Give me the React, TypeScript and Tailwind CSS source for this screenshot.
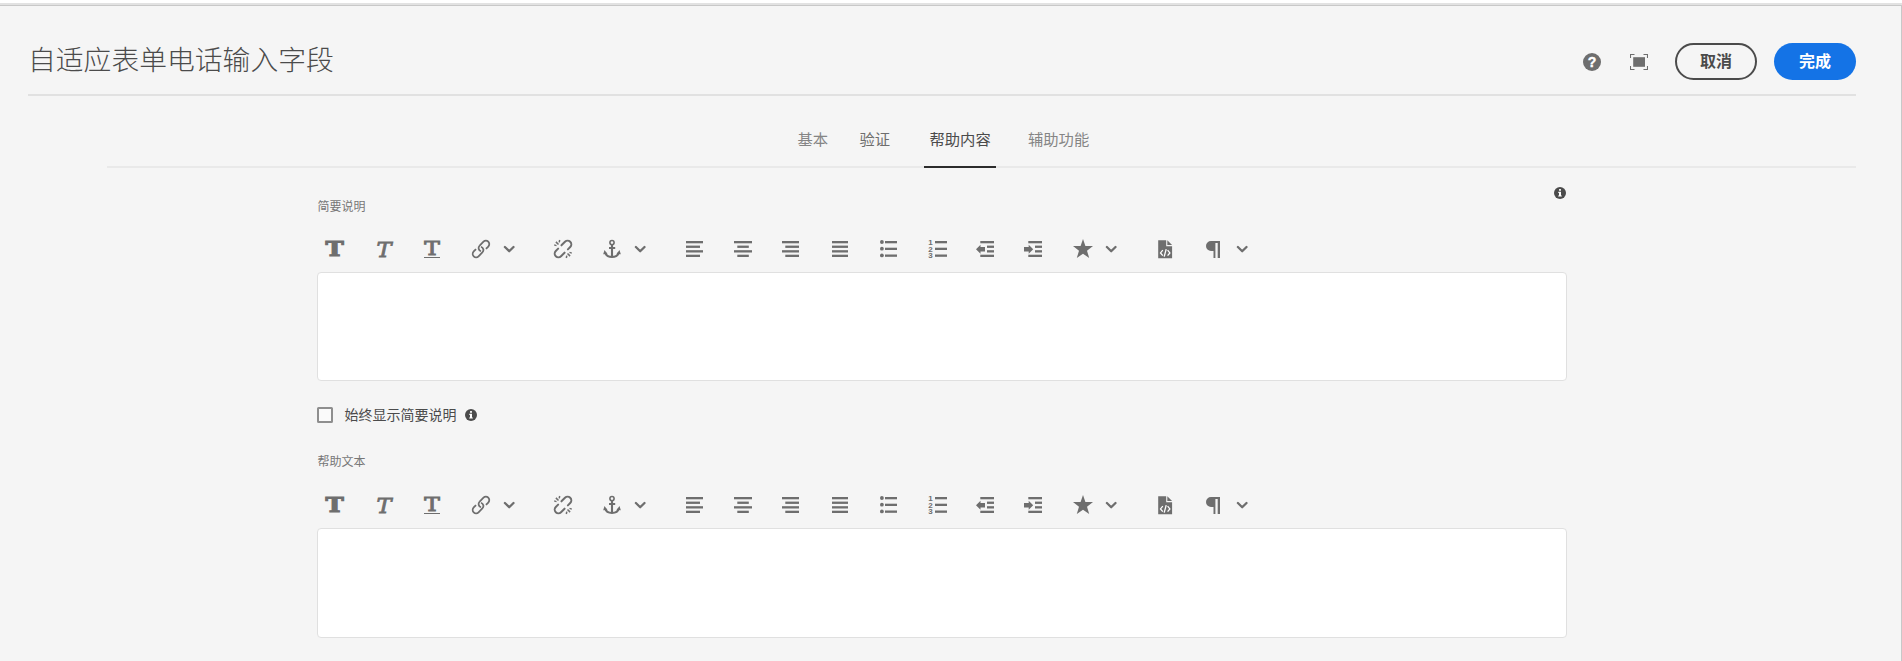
import type { ReactNode } from "react";

function Icon({ className = "", children }: { className?: string; children: ReactNode }) {
  return (
    <button type="button" className={`h-5 w-5 shrink-0 ${className}`}>
      <svg viewBox="0 0 20 20" width="20" height="20" fill="currentColor" className="block overflow-visible">
        {children}
      </svg>
    </button>
  );
}

function Chevron({ className = "" }: { className?: string }) {
  return (
    <button type="button" className={`h-5 w-3 shrink-0 ${className}`}>
      <svg viewBox="0 0 12 20" width="12" height="20" fill="none" stroke="currentColor" strokeWidth="2.3" strokeLinecap="round" strokeLinejoin="round" className="block">
        <path d="M1.9 8 6.2 12.2 10.5 8" />
      </svg>
    </button>
  );
}

/* Each entry is [x, y, width] of one horizontal stroke. */
function Lines({ rows, height = 2.3 }: { rows: number[][]; height?: number }) {
  return (
    <>
      {rows.map(([x, y, w]) => (
        <rect key={y} x={x} y={y} width={w} height={height} />
      ))}
    </>
  );
}

function InfoIcon({ className = "" }: { className?: string }) {
  return (
    <svg viewBox="0 0 12 12" width="12" height="12" className={`block shrink-0 text-[#4b4b4b] ${className}`}>
      <circle cx="6" cy="6" r="6" fill="currentColor" />
      <rect x="5" y="2" width="2" height="1.8" rx=".6" fill="#fff" />
      <path d="M4.3 4.8H7v3.7h.8v1.1H4.2V8.5H5V5.9h-.7z" fill="#fff" />
    </svg>
  );
}

const SPARKS = "M1.2 5.9 3.5 6.6M2.9 2.9 5.5 5.5M6.7 1 6.2 3.4";

function Toolbar() {
  return (
    <div className="flex h-5 items-center pl-2 text-[#6e6e6e]">
      <Icon>
        <text x="0.4" y="17.4" textLength="18.2" lengthAdjust="spacingAndGlyphs" fontSize="20.5" fontWeight="700" stroke="currentColor" strokeWidth="1.2" className="font-['DejaVu_Serif',serif]">T</text>
      </Icon>
      <Icon className="ml-[30px]">
        <text x="1.5" y="17.7" textLength="15" lengthAdjust="spacingAndGlyphs" fontSize="21" fontStyle="italic" stroke="currentColor" strokeWidth=".8" className="font-['DejaVu_Serif',serif]">T</text>
      </Icon>
      <Icon className="ml-[27px]">
        <text x="2.2" y="16" textLength="15.6" lengthAdjust="spacingAndGlyphs" fontSize="18.8" stroke="currentColor" strokeWidth=".9" className="font-['DejaVu_Serif',serif]">T</text>
        <rect x="2" y="18" width="16" height="1" />
      </Icon>
      <Icon className="ml-[29px]">
        <g transform="rotate(-45 10 10)" fill="none" stroke="currentColor" strokeWidth="1.8">
          <path d="M13.6 13.4h3.3a3.4 3.4 0 0 0 0-6.8H11.5a3.4 3.4 0 0 0-3.1 5" />
          <path d="M6.4 6.6H3.1a3.4 3.4 0 0 0 0 6.8H8.5a3.4 3.4 0 0 0 3.1-5" />
        </g>
      </Icon>
      <Chevron className="ml-3" />
      <Icon className="ml-[38px]">
        <g fill="none" stroke="currentColor" strokeWidth="2" strokeLinecap="round">
          <path d="M11.5 6.3h5a3.7 3.7 0 0 1 0 7.4H13.2" transform="rotate(-45 10 10)" />
          <path d="M11.5 6.3h5a3.7 3.7 0 0 1 0 7.4H13.2" transform="rotate(135 10 10)" />
        </g>
        <g fill="none" stroke="currentColor" strokeWidth="1.5">
          <path d={SPARKS} />
          <path d={SPARKS} transform="rotate(180 10 10)" />
        </g>
      </Icon>
      <Icon className="ml-[29px]">
        <g fill="none" stroke="currentColor">
          <circle cx="10" cy="3.6" r="2.1" strokeWidth="1.6" />
          <path d="M10 5.5V18" strokeWidth="2.1" />
          <path d="M7 9h6.2" strokeWidth="2" />
          <path d="M3.2 13.5c.7 3 3.3 4.4 6.8 4.4s6.1-1.4 6.8-4.4" strokeWidth="2" />
        </g>
        <path d="M2.5 11 5.5 14.9 1.2 15.2zM17.5 11 14.5 14.9l4.3.3z" />
      </Icon>
      <Chevron className="ml-3" />
      <Icon className="ml-[39px]">
        <Lines rows={[[1, 2, 17], [1, 6.6, 14], [1, 11.2, 17], [1, 15.7, 14]]} />
      </Icon>
      <Icon className="ml-7">
        <Lines rows={[[1, 2, 18], [4.3, 6.6, 11.5], [1, 11.2, 18], [4.3, 15.7, 11.5]]} />
      </Icon>
      <Icon className="ml-7">
        <Lines rows={[[1, 2, 17], [4.3, 6.6, 13.7], [1, 11.2, 17], [4.3, 15.7, 13.7]]} />
      </Icon>
      <Icon className="ml-[29px]">
        <Lines rows={[[2, 2, 16], [2, 6.6, 16], [2, 11.2, 16], [2, 15.7, 16]]} />
      </Icon>
      <Icon className="ml-[29px]">
        <Lines rows={[[6, 2, 12], [6, 8.7, 12], [6, 15.5, 12]]} />
        <circle cx="2.9" cy="3" r="1.9" />
        <circle cx="2.9" cy="9.7" r="1.9" />
        <circle cx="2.9" cy="16.4" r="1.9" />
      </Icon>
      <Icon className="ml-[29px]">
        <Lines rows={[[7, 2, 12], [7, 8.7, 12], [7, 15.5, 12]]} />
        <text fontSize="8" fontWeight="700" className="font-['Liberation_Sans',sans-serif]">
          <tspan x="0.2" y="6">1</tspan>
          <tspan x="0.2" y="12.7">2</tspan>
          <tspan x="0.2" y="19.3">3</tspan>
        </text>
      </Icon>
      <Icon className="ml-[27px]">
        <Lines rows={[[5.3, 2, 13.7], [12, 6.6, 7], [12, 11.2, 7], [5.3, 15.7, 13.7]]} />
        <path d="M1 10.2 5.5 5.7v2.3h4.5v4.4H5.5v2.3z" />
      </Icon>
      <Icon className="ml-7">
        <Lines rows={[[5.3, 2, 13.7], [12, 6.6, 7], [12, 11.2, 7], [5.3, 15.7, 13.7]]} />
        <path d="M10.2 10.2 5.7 5.7v2.3H1v4.4h4.7v2.3z" />
      </Icon>
      <Icon className="ml-[30px]">
        <path d="M10 0l2.4 7 7.6.1-6 4.6 2.2 7.3-6.2-4.3-6.2 4.3 2.2-7.3-6-4.6 7.6-.1z" />
      </Icon>
      <Chevron className="ml-3" />
      <Icon className="ml-[38px]">
        <path d="M3.2 1.2h8v6h5.9v12H3.2z" />
        <path d="M12.3 1.2 17.1 6.1h-4.8z" />
        <path d="M7.8 11.1 5.5 13.9 7.8 16.7M12.6 11.1l2.3 2.8-2.3 2.8M11.2 10.2 9.2 17.6" fill="none" stroke="#fff" strokeWidth="1.3" />
      </Icon>
      <Icon className="ml-7">
        <path d="M17 2v17h-2.3V4.1h-2.3V19h-1.9v-7H8A5 5 0 0 1 8 2z" />
      </Icon>
      <Chevron className="ml-[13px]" />
    </div>
  );
}

const FIELD_LABEL = "h-4 pl-[0.5px] text-xs leading-4 text-[#777]";
const TABS = [
  { label: "基本", className: "ml-[797px] w-[62px] pl-[0.5px] text-[#858585]" },
  { label: "验证", className: "w-[65px] pl-[0.5px] text-[#6e6e6e]" },
  { label: "帮助内容", className: "w-[72px] border-b-2 border-[#2c2c2c] pl-[5.5px] text-[#4b4b4b]" },
  { label: "辅助功能", className: "pl-8 text-[#858585]" },
];

export default function App() {
  return (
    <div className="h-[661px] w-[1902px] overflow-hidden bg-white pt-[3px] font-['Noto_Sans_CJK_SC',sans-serif]">
      <div className="h-0.5 bg-[#e2e2e2]" />
      <div className="h-[656px] border-t border-r border-[#c8c8c8] bg-[#f5f5f5]">
        <header className="ml-7 flex h-[90px] w-[1828px] items-start border-b-2 border-[#e1e1e1]">
          <h1 className="mt-8 text-[27.8px] leading-10 font-light text-[#4b4b4b]">自适应表单电话输入字段</h1>
          <div className="mt-[37px] ml-auto flex h-[37px] items-center">
            <button type="button" className="mr-[29px]">
              <svg viewBox="0 0 18 18" width="18" height="18" className="block overflow-visible text-[#6e6e6e]">
                <circle cx="9" cy="9" r="9" fill="currentColor" />
                <text x="9" y="14" textAnchor="middle" fontSize="14" fontWeight="700" fill="#fff" stroke="#fff" strokeWidth=".4" className="font-['Liberation_Sans',sans-serif]">?</text>
              </svg>
            </button>
            <button type="button" className="mr-[27px]">
              <svg viewBox="0 0 18 16" width="18" height="16" className="block text-[#6e6e6e]">
                <path d="M.5 4V.5h4M13.5.5h4V4M17.5 12v3.5h-4M4.5 15.5h-4V12" fill="none" stroke="currentColor" strokeWidth="1.1" />
                <rect x="3.2" y="3.2" width="11.8" height="9.6" fill="currentColor" />
              </svg>
            </button>
            <button type="button" className="h-[37px] w-[82px] rounded-full border-2 border-[#4b4b4b] pb-0.5 text-[16px] leading-[31px] font-bold text-[#4b4b4b]">取消</button>
            <button type="button" className="ml-[17px] h-[37px] w-[82px] rounded-full bg-[#1473e6] pb-0.5 text-[16px] leading-[35px] font-bold text-white">完成</button>
          </div>
        </header>

        <nav className="flex flex-col">
          <div className="flex h-[72px] items-end text-[15.3px]">
            {TABS.map((tab) => (
              <button key={tab.label} type="button" className={`relative z-10 flex h-[54px] items-start text-left leading-[48px] ${tab.className}`}>{tab.label}</button>
            ))}
          </div>
          <div className="-mt-0.5 ml-[107px] h-0.5 w-[1749px] bg-[#e9e9e9]" />
        </nav>

        <main className="ml-[317px] flex w-[1250px] flex-col">
          <div className="flex h-[71px] items-start justify-between">
            <label className={`mt-[30px] ${FIELD_LABEL}`}>简要说明</label>
            <InfoIcon className="mt-[19px] mr-px" />
          </div>
          <Toolbar />
          <div className="mt-[13px] h-[109px] rounded border border-[#e0e0e0] bg-white" />
          <div className="mt-6 flex h-5 items-center">
            <span className="h-4 w-4 rounded-[1.5px] border-2 border-[#8e8e8e] bg-[#fafafa]" />
            <span className="ml-[11.5px] pb-0.5 text-sm leading-5 text-[#4b4b4b]">始终显示简要说明</span>
            <InfoIcon className="ml-[8.5px]" />
          </div>
          <label className={`mt-7 ${FIELD_LABEL}`}>帮助文本</label>
          <div className="mt-[26px]">
            <Toolbar />
          </div>
          <div className="mt-[13px] h-[110px] rounded border border-[#e0e0e0] bg-white" />
        </main>
      </div>
    </div>
  );
}
